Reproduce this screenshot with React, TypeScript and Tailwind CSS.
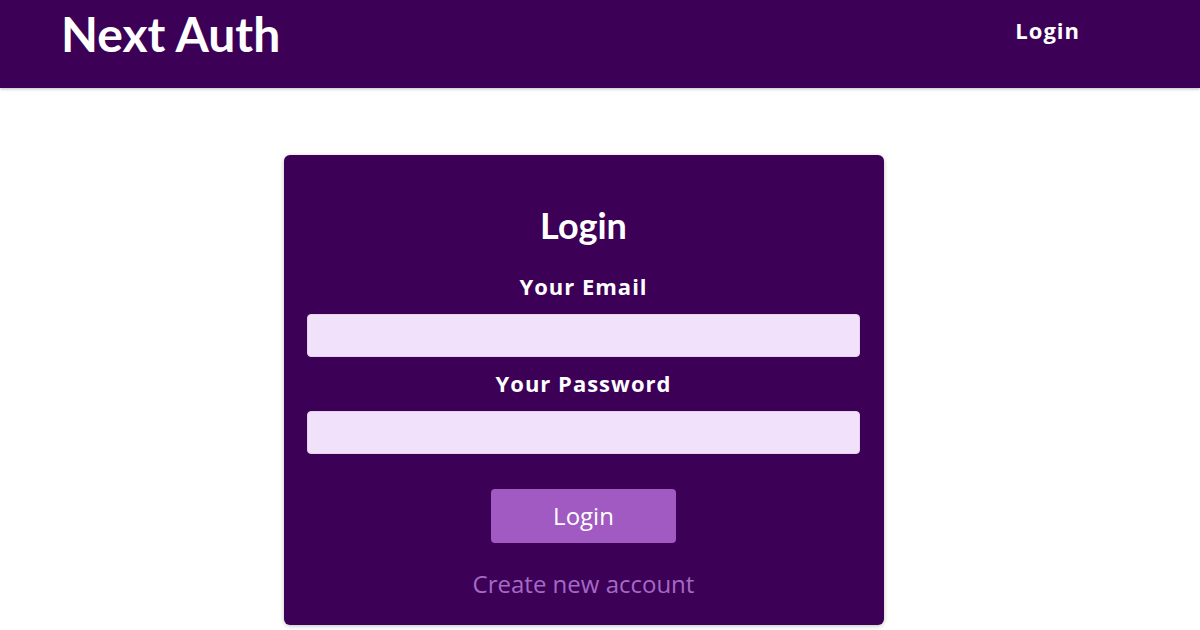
import React from 'react';

function Header() {
  return (
    <header className="h-[88px] bg-[#3c0157] flex items-start justify-between pl-[61px] pr-[120px] shadow-[0_1px_3px_rgba(0,0,0,0.25)]">
      <div className="mt-[10px] text-white font-bold text-[48px] leading-[48px] font-['Lato',sans-serif]">Next Auth</div>
      <nav className="mt-[15px]">
        <a className="text-white font-bold text-[22px] leading-[30px] tracking-[1px] font-['Open_Sans',sans-serif]">Login</a>
      </nav>
    </header>
  );
}

function Field({ label, type }: { label: string; type: string }) {
  return (
    <div className="flex flex-col items-center">
      <label className="text-white font-bold text-[22px] leading-[30px] tracking-[1px] font-['Open_Sans',sans-serif] mb-[13px]">{label}</label>
      <input type={type} className="w-full h-[43px] rounded-[4px] bg-[#f1e1fb] border border-[#e4d0f0] outline-none px-2" />
    </div>
  );
}

function App() {
  return (
    <div className="min-h-screen bg-white">
      <Header />
      <main className="pt-[67px]">
        <section className="ml-[284px] w-[600px] bg-[#3c0157] rounded-[6px] shadow-[0_1px_4px_rgba(0,0,0,0.25)] pl-[23px] pr-[24px] pt-[48px] pb-[25px] text-center">
          <h1 className="text-white font-bold text-[36px] leading-[44px] font-['Lato',sans-serif] mb-[24px]">Login</h1>
          <div className="flex flex-col gap-[11px]">
            <Field label="Your Email" type="email" />
            <Field label="Your Password" type="password" />
          </div>
          <div className="mt-[35px] flex flex-col items-center">
            <button className="w-[185px] h-[54px] rounded-[4px] bg-[#a05ac2] text-white text-[24px] font-['Open_Sans',sans-serif]">Login</button>
            <button className="mt-[25px] text-[#a569c6] text-[24px] leading-[32px] font-['Open_Sans',sans-serif]">Create new account</button>
          </div>
        </section>
      </main>
    </div>
  );
}

export default App;
